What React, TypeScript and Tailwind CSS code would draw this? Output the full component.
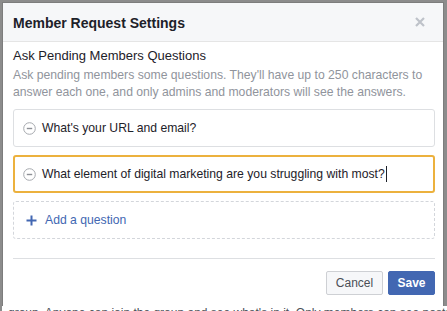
import React from "react";

function MinusCircle() {
  return (
    <svg width="13" height="13" viewBox="0 0 13 13" className="shrink-0">
      <circle cx="6.5" cy="6.5" r="5.8" fill="none" stroke="#a6a9ae" strokeWidth="1" />
      <line x1="3.8" y1="6.5" x2="9.2" y2="6.5" stroke="#8d9096" strokeWidth="1.4" />
    </svg>
  );
}

export default function App() {
  return (
    <div
      className="w-[447px] h-[311px] overflow-hidden bg-[#8c8c8c] flex flex-col"
      style={{ fontFamily: '"Liberation Sans", Arial, sans-serif' }}
    >
      <div className="ml-[2px] mt-[2px] w-[442px] h-[304px] shrink-0 bg-white flex flex-col border border-[#7d7d7d] border-b-0">
        <div className="h-[39px] shrink-0 bg-[#f6f7f9] border-b border-[#e5e5e5] flex items-center justify-between pl-[10px] pr-[18px]">
          <span className="text-[14px] font-bold text-[#1d2129] leading-none mt-[2px]">Member Request Settings</span>
          <svg width="10" height="10" viewBox="0 0 10 10">
            <path d="M1 1 L9 9 M9 1 L1 9" stroke="#bec2c9" strokeWidth="2.2" />
          </svg>
        </div>
        <div className="pl-[10px] pr-[8px] pt-[6px] flex flex-col">
          <div className="text-[13px] text-[#1d2129] leading-[16px]">Ask Pending Members Questions</div>
          <div className="text-[12.2px] text-[#90949c] leading-[17px] mt-[3px] whitespace-nowrap">
            Ask pending members some questions. They'll have up to 250 characters to
            <br />
            answer each one, and only admins and moderators will see the answers.
          </div>
          <div className="mt-[8px] h-[38px] rounded-[3px] border border-[#dddfe2] flex items-center gap-[6px] pl-[9px]">
            <MinusCircle />
            <span className="text-[12.2px] text-[#1d2129]">What's your URL and email?</span>
          </div>
          <div className="mt-[8px] h-[38px] rounded-[3px] border-2 border-[#ecb13d] flex items-center gap-[6px] pl-[8px]">
            <MinusCircle />
            <span className="text-[12.2px] text-[#1d2129] flex items-center">
              What element of digital marketing are you struggling with most?
              <span className="inline-block w-px h-[16px] bg-[#1d2129] ml-px"></span>
            </span>
          </div>
          <div className="mt-[8px] h-[38px] rounded-[3px] border border-dashed border-[#d3d6db] flex items-center gap-[8px] pl-[12px]">
            <svg width="11" height="11" viewBox="0 0 11 11">
              <path d="M5.5 0.5 V10.5 M0.5 5.5 H10.5" stroke="#4267b2" strokeWidth="2" />
            </svg>
            <span className="text-[12.2px] text-[#4267b2]">Add a question</span>
          </div>
          <div className="mt-[19px] border-t border-[#dddfe2]"></div>
          <div className="mt-[12px] flex justify-end gap-[5px]">
            <button className="h-[24px] w-[57px] rounded-[2px] border border-[#ced0d4] bg-[#f6f7f9] text-[12px] text-[#4b4f56]">
              Cancel
            </button>
            <button className="h-[24px] w-[47px] rounded-[2px] border border-[#4267b2] bg-[#4267b2] text-[12px] font-bold text-white">
              Save
            </button>
          </div>
        </div>
      </div>
      <div className="flex-1 ml-[2px] bg-white overflow-hidden">
        <div className="text-[12px] text-[#4b4f56] leading-[12px] mt-[1px] pl-[6px] whitespace-nowrap">
          group. Anyone can join the group and see what's in it. Only members can see posts
        </div>
      </div>
    </div>
  );
}
